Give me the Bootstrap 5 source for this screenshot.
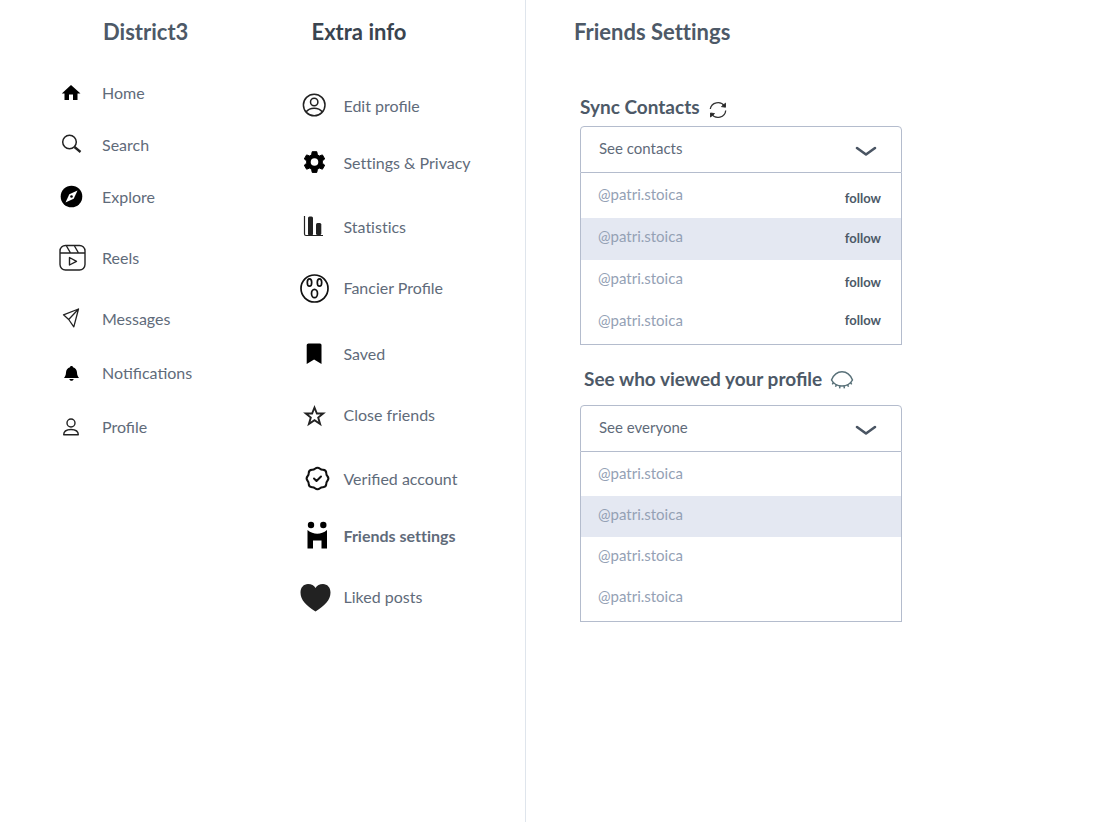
<!DOCTYPE html>
<html lang="en">
<head>
<meta charset="utf-8">
<meta name="viewport" content="width=device-width, initial-scale=1">
<title>District3 – Friends Settings</title>
<link href="https://cdn.jsdelivr.net/npm/bootstrap@5.3.0/dist/css/bootstrap.min.css" rel="stylesheet">
<style>
  :root { --ink: #4d5967; --muted-ink: #5f6b7a; --handle: #94a1b5; --line: #b4bccd; --hover: #e4e8f2; }
  body { font-family: Lato, sans-serif; color: var(--ink); background: #fff; }
  .menus { width: 47%; box-sizing: content-box; border-right: 1px solid #dfe5ec; }
  .page-title { font-size: 22px; line-height: 32px; font-weight: 700; margin: 0; }
  .main-menu { padding-left: 55px; }
  .main-menu .page-title { padding-left: 48px; margin-bottom: 29px; }
  .extra-menu { padding-left: 37px; }
  .extra-menu .page-title { padding-left: 12px; margin-bottom: 42px; color: #3a444f; }
  .menu-item { height: 32px; font-size: 16px; line-height: 24px; color: var(--muted-ink); white-space: nowrap; }
  .menu-item svg { width: 32px; height: 32px; flex: none; color: #000; }
  .main-menu .menu-item { gap: 15px; }
  .extra-menu .menu-item { gap: 12px; }
  .menu-item.current { font-weight: 700; }
  .plain-t { font-variant-ligatures: none; }
  .gap-a { margin-top: 20px; } .gap-b { margin-top: 22px; } .gap-c { margin-top: 25px; }
  .gap-d { margin-top: 29px; } .gap-e { margin-top: 32px; } .gap-f { margin-top: 34px; }
  .settings { padding-left: 48px; }
  .settings-body { max-width: 328px; padding-left: 6px; margin-top: 45px; }
  .sync-row { margin-bottom: 5px; }
  .group-label { font-size: 19px; line-height: 28px; font-weight: 700; }
  .picker { height: 47px; padding: 0 40px 3px 18px; font-size: 15px; color: var(--muted-ink);
    border: 1px solid var(--line); border-radius: 4px 4px 0 0; background-position: right 24px top 19px; background-size: 22px 12px;
    background-image: url("data:image/svg+xml,%3Csvg xmlns='http://www.w3.org/2000/svg' viewBox='0 0 22 12'%3E%3Cpath d='M2 2l9 6.500 9-6.500' fill='none' stroke='%234a5563' stroke-width='2.600' stroke-linecap='round' stroke-linejoin='round'/%3E%3C/svg%3E"); }
  .people { border: 1px solid var(--line); border-top: 0; padding-top: 3px; }
  .person { height: 42px; padding: 0 20px 6px 17px; font-size: 15px; line-height: 20px; }
  .viewers .person { height: 41px; }
  .viewers { padding-bottom: 2px; }
  .person a { color: var(--handle); }
  .person.picked { background: var(--hover); }
  .person button { font-size: 13px; font-weight: 700; line-height: 20px; color: var(--ink); }
</style>
</head>
<body>
<div class="d-flex min-vh-100">
  <div class="menus d-flex flex-shrink-0">
    <nav class="main-menu w-50 pt-3" aria-label="Main">
      <h1 class="page-title">District3</h1>
      <a href="#" class="menu-item d-flex align-items-center text-decoration-none">
        <svg viewBox="0 0 32 32" fill="currentColor"><path d="M16 8l9.500 8.500H22.500V23H18v-5.500h-4V23H9.500v-6.500H6.800z"/></svg>Home</a>
      <a href="#" class="menu-item gap-a d-flex align-items-center text-decoration-none">
        <svg viewBox="0 0 32 32" fill="none" stroke="#222"><circle cx="14.500" cy="13" r="6.800" stroke-width="1.500"/><path d="M19.500 18l6 5" stroke-width="2.300"/></svg>Search</a>
      <a href="#" class="menu-item gap-a d-flex align-items-center text-decoration-none">
        <svg viewBox="0 0 32 32"><circle cx="16.500" cy="15.500" r="10.800"/><path d="M22.500 9.500l-3.800 8.200-8.200 3.800 3.800-8.200z" fill="#fff"/><circle cx="16.500" cy="15.500" r="1.300"/></svg>Explore</a>
      <a href="#" class="menu-item gap-d d-flex align-items-center text-decoration-none">
        <svg viewBox="0 0 32 32" fill="none" stroke="#222" stroke-width="1.400" stroke-linejoin="round"><rect x="5" y="3.500" width="25" height="24.500" rx="5.500"/><path d="M5 11h25M11.500 4l4 7M19.500 4l4 7M14.500 15.500v7.500l7-3.700z"/></svg>Reels</a>
      <a href="#" class="menu-item gap-d d-flex align-items-center text-decoration-none">
        <svg viewBox="0 0 32 32" fill="none" stroke="#222" stroke-width="1.300" stroke-linejoin="round"><path d="M23.500 6L8.500 11.800l5.200 4.700 5.100 7.300zM13.700 16.500L23.500 6"/></svg>Messages</a>
      <a href="#" class="menu-item gap-b d-flex align-items-center text-decoration-none">
        <svg viewBox="0 0 32 32"><path d="M16.500 9c.8 0 1.400.5 1.500 1.200 2.500.7 3.900 2.800 4 5.300.1 2.500.7 3.800 2 5.500H9c1.300-1.700 1.900-3 2-5.500.1-2.500 1.500-4.600 4-5.300.1-.7.700-1.200 1.500-1.200zM14.300 22h4.400c-.3 1.200-1.100 1.800-2.200 1.800s-1.900-.6-2.200-1.800z"/></svg>Notifications</a>
      <a href="#" class="menu-item gap-b d-flex align-items-center text-decoration-none">
        <svg viewBox="0 0 32 32" fill="none" stroke="#222" stroke-width="1.400"><circle cx="16" cy="12" r="4"/><path d="M8.700 23.800c0-4 2.300-5.300 7.300-5.300s7.300 1.300 7.300 5.300z" stroke-linejoin="round"/></svg>Profile</a>
    </nav>
    <nav class="extra-menu w-50 pt-3" aria-label="Extra info">
      <h2 class="page-title">Extra info</h2>
      <a href="#" class="menu-item d-flex align-items-center text-decoration-none">
        <svg viewBox="0 0 32 32" fill="none" stroke="#222" stroke-width="1.500"><circle cx="15.200" cy="15" r="10.800"/><circle cx="15.200" cy="12" r="3.700"/><path d="M7 22c2.300-2.800 5-3.700 8.200-3.700s5.900.9 8.200 3.700"/></svg>Edit profile</a>
      <a href="#" class="menu-item plain-t gap-c d-flex align-items-center text-decoration-none">
        <svg viewBox="0 0 32 32"><path d="M13.200 4.700h4.600l.6 3.100 2 1.200 3-1.100 2.300 4-2.400 2v2.300l2.400 2-2.300 4-3-1.100-2 1.200-.6 3.100h-4.600l-.6-3.100-2-1.200-3 1.100-2.300-4 2.400-2v-2.300l-2.400-2 2.300-4 3 1.100 2-1.200z" stroke="#000" stroke-linejoin="round"/><circle cx="15.500" cy="15" r="3.800" fill="#fff"/></svg>Settings &amp; Privacy</a>
      <a href="#" class="menu-item plain-t gap-e d-flex align-items-center text-decoration-none">
        <svg viewBox="0 0 32 32" fill="#222"><path d="M5.500 5v18q0 1.500 1.500 1.500h17" fill="none" stroke="#222" stroke-width="1.200"/><rect x="9" y="5.500" width="5" height="19" rx="1.500"/><rect x="17" y="12" width="5.300" height="12" rx="1.500"/></svg>Statistics</a>
      <a href="#" class="menu-item gap-d d-flex align-items-center text-decoration-none">
        <svg viewBox="0 0 32 32" fill="none" stroke="#111" stroke-width="1.700"><circle cx="15.500" cy="16.500" r="13.500"/><ellipse cx="10.500" cy="10.500" rx="2.200" ry="3.700"/><ellipse cx="20.500" cy="10.500" rx="2.200" ry="3.700"/><ellipse cx="15.500" cy="21.500" rx="3" ry="4.200"/></svg>Fancier Profile</a>
      <a href="#" class="menu-item gap-f d-flex align-items-center text-decoration-none">
        <svg viewBox="0 0 32 32"><path d="M9.500 5.500h11.500q1.500 0 1.500 1.500V26l-7.400-4.500L7.700 26V7q0-1.500 1.800-1.500z"/></svg>Saved</a>
      <a href="#" class="menu-item gap-d d-flex align-items-center text-decoration-none">
        <svg viewBox="0 0 32 32" fill="none" stroke="#222" stroke-width="1.900"><path d="M15.500 8.500l2.400 6h6.300l-5 4 1.900 6.500-5.600-3.800L9.900 25l1.900-6.500-5-4h6.300z"/></svg>Close friends</a>
      <a href="#" class="menu-item gap-e d-flex align-items-center text-decoration-none">
        <svg viewBox="0 0 32 32" fill="none" stroke="#111" stroke-width="2" stroke-linejoin="round" stroke-linecap="round"><path d="M16 5.800Q18.500 3.600 21 5.800Q22.200 6.900 24 6.800Q27.300 7 27.300 10.200Q27.200 11.800 28.300 13Q30.500 15.500 28.300 18Q27.200 19.200 27.300 20.800Q27.300 24 24 24.200Q22.200 24.100 21 25.200Q18.500 27.400 16 25.200Q14.800 24.100 13 24.200Q9.700 24 9.700 20.800Q9.800 19.200 8.700 18Q6.500 15.500 8.700 13Q9.800 11.800 9.700 10.200Q9.700 7 13 6.800Q14.800 6.900 16 5.800z"/><path d="M15 15.500l2.500 2.500 4.500-4.500"/></svg>Verified account</a>
      <a href="#" class="menu-item plain-t current gap-c d-flex align-items-center text-decoration-none" aria-current="page">
        <svg viewBox="0 0 32 32"><circle cx="12" cy="5" r="3.200"/><circle cx="24.300" cy="5" r="3.200"/><path d="M8.500 10c6 5 13.500 5 19.500 0V28.500h-5.500V20.500h-8.500v8H8.500z"/></svg>Friends settings</a>
      <a href="#" class="menu-item gap-d d-flex align-items-center text-decoration-none">
        <svg viewBox="0 0 32 32"><path d="M16.500 30.500C7 24.500 1.500 19 1.500 11.500 1.500 6.500 4.700 3 9 3c3.500 0 6 1.500 7.500 4C18 4.500 20.500 3 24 3c4.300 0 7.500 3.500 7.500 8.500 0 7.500-5.500 13-15 19z" fill="#222"/></svg>Liked posts</a>
    </nav>
  </div>

  <main class="settings flex-grow-1 pt-3">
    <h2 class="page-title plain-t">Friends Settings</h2>
    <div class="settings-body">
      <div class="sync-row d-flex align-items-end gap-2">
        <label class="group-label" for="contacts">Sync Contacts</label>
        <svg width="20" height="20" viewBox="0 0 20 20" fill="none" stroke="#333" stroke-width="1.300"><path d="M2.300 8A7.800 7.300 0 0 1 16.500 5M17.700 9.500A7.800 7.300 0 0 1 3.500 13.200"/><path d="M17.500 2.200v4l-4-.6zM2.500 16v-4l4 .6z" fill="#222" stroke-width="1"/></svg>
      </div>
      <select id="contacts" class="form-select picker"><option>See contacts</option></select>
      <ul class="people list-unstyled mb-0">
        <li class="person d-flex align-items-center justify-content-between"><a href="#" class="text-decoration-none">@patri.stoica</a><button type="button" class="btn border-0 p-0 pt-2">follow</button></li>
        <li class="person picked d-flex align-items-center justify-content-between"><a href="#" class="text-decoration-none">@patri.stoica</a><button type="button" class="btn border-0 p-0 pt-1">follow</button></li>
        <li class="person d-flex align-items-center justify-content-between"><a href="#" class="text-decoration-none">@patri.stoica</a><button type="button" class="btn border-0 p-0 pt-2">follow</button></li>
        <li class="person d-flex align-items-center justify-content-between"><a href="#" class="text-decoration-none">@patri.stoica</a><button type="button" class="btn border-0 p-0">follow</button></li>
      </ul>
      <div class="d-flex align-items-center gap-2 mt-3 mb-2 pt-1 pb-1 ps-1">
        <label class="group-label" for="viewers">See who viewed your profile</label>
        <svg width="24" height="22" viewBox="0 0 24 22" fill="none" stroke="#587078" stroke-width="1.500"><path d="M1.500 12C4 6 7.500 3.800 12 3.800S20 6 22.500 12C20 16.500 16.500 18 12 18S4 16.500 1.500 12z" stroke-linejoin="round"/><path d="M3.500 14.500l-1.200 1.800M6.500 16.500l-1 2.300M10 17.800l-.4 2.600M14 17.800l.4 2.600M17.500 16.500l1 2.300M20.500 14.500l1.200 1.800"/></svg>
      </div>
      <select id="viewers" class="form-select picker"><option>See everyone</option></select>
      <ul class="people viewers list-unstyled mb-0">
        <li class="person d-flex align-items-center"><a href="#" class="text-decoration-none">@patri.stoica</a></li>
        <li class="person picked d-flex align-items-center"><a href="#" class="text-decoration-none">@patri.stoica</a></li>
        <li class="person d-flex align-items-center"><a href="#" class="text-decoration-none">@patri.stoica</a></li>
        <li class="person d-flex align-items-center"><a href="#" class="text-decoration-none">@patri.stoica</a></li>
      </ul>
    </div>
  </main>
</div>
<script src="https://cdn.jsdelivr.net/npm/bootstrap@5.3.0/dist/js/bootstrap.bundle.min.js"></script>
</body>
</html>
